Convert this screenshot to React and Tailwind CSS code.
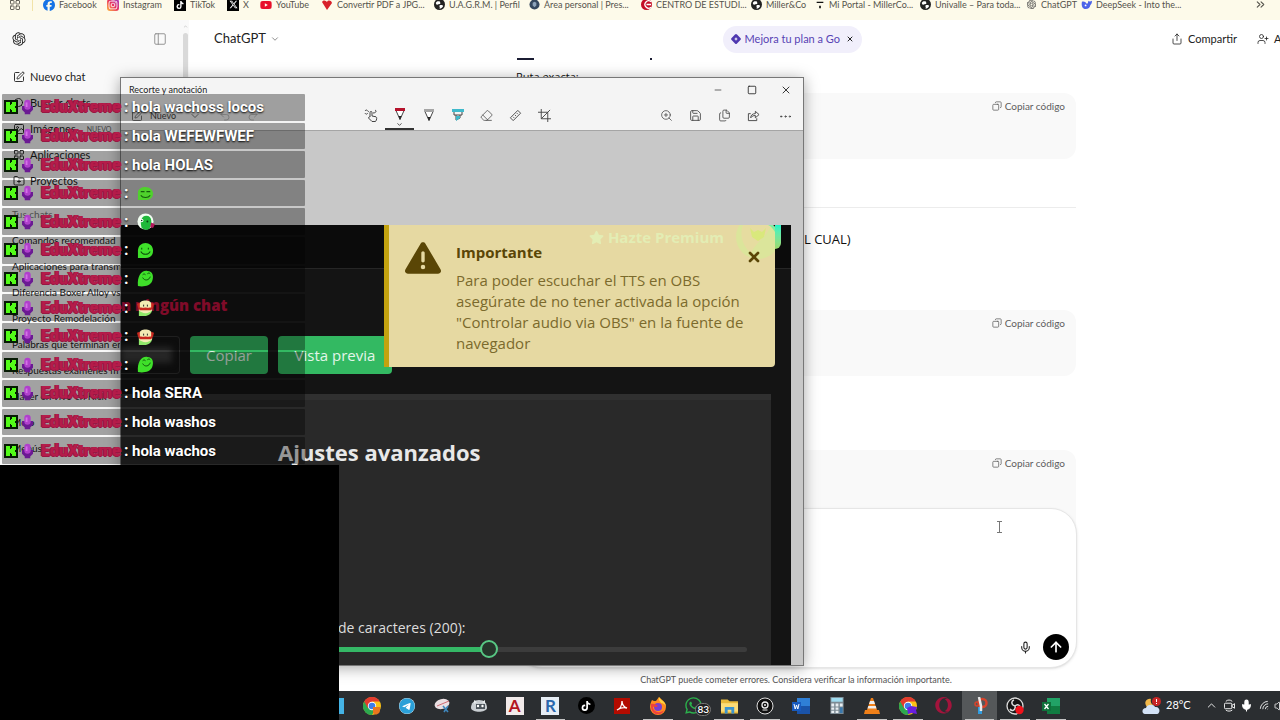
import React from "react";
import {
  FaFacebook, FaTiktok, FaYoutube, FaTelegram, FaWhatsapp, FaOpera, FaStar, FaTriangleExclamation, FaXTwitter, FaInstagram,
} from "react-icons/fa6";
import { RiOpenaiFill } from "react-icons/ri";
import {
  ArrowUp, ChevronDown, ChevronUp, ChevronsRight, Copy, Ellipsis, Eraser, Files, FolderPlus, LayoutGrid,
  Mic, Minus, PanelLeft, Redo2, Save, Search, Share, Square, SquarePen, Undo2, UserPlus, X, ZoomIn,
  Volume2, Wifi, Image as Picture,
} from "lucide-react";

function Globe() {
  return (
    <svg viewBox="0 0 12 12" className="size-[11px]">
      <circle cx="6" cy="6" r="6" fill="#222" />
      <path d="M2 4c2-2.500 3-1 4.500-1.500C6 4 8 4 6.500 5.500 5 6 4 5 3.500 6.500 2.500 6 2 5 2 4zM6 7c2-1 3.500 0 4 .5C9 9.500 7.500 10.500 6 10.500 7 9 5.500 8.500 6 7z" fill="#fff" />
    </svg>
  );
}

function Chrome({ badge }) {
  return (
    <svg viewBox="0 0 18 18" className="size-[18px]">
      <circle cx="9" cy="9" r="9" fill="#fbc116" />
      <path d="M1.200 4.500A9 9 0 0 0 9 18l3.900-6.800L9 9z" fill="#2da94f" />
      <path d="M1.200 4.500A9 9 0 0 1 16.800 4.500H9L5 11.300z" fill="#e33b2e" />
      <circle cx="9" cy="9" r="4.200" fill="#fff" />
      <circle cx="9" cy="9" r="3.300" fill="#3f7de8" />
      {badge === "orange" && <path d="M10 10h7v4a4 4 0 0 1-7 2z" fill="#e9761d" />}
      {badge === "purple" && <path d="M8 11l4-2 6 1-1 3 1 4-5-1-4 1z" fill="#6a1fe0" />}
    </svg>
  );
}

const bookmarks = [
  { name: "Facebook", w: "w-[64px]", icon: <FaFacebook className="size-3 text-[#1673e6]" /> },
  { name: "Instagram", w: "w-[67px]", icon: <span className="grid size-3 place-items-center rounded-[3px] bg-linear-to-tr from-[#fdb52a] via-[#e8315f] to-[#a22bc4] text-white"><FaInstagram className="size-[10px]" /></span> },
  { name: "TikTok", w: "w-[53px]", icon: <span className="grid size-3 place-items-center bg-black text-white"><FaTiktok className="size-2" /></span> },
  { name: "X", w: "w-[33px]", icon: <span className="grid size-3 place-items-center bg-black text-white"><FaXTwitter className="size-[9px]" /></span> },
  { name: "YouTube", w: "w-[61px]", icon: <FaYoutube className="size-3 text-[#e8102a]" /> },
  { name: "Convertir PDF a JPG...", w: "w-[113px]", icon: <svg viewBox="0 0 12 12" className="size-3"><path d="M1 3c2-3 4-1 5 0 1-2 4-2 5 1L6 11z" fill="#d8212b" /></svg> },
  { name: "U.A.G.R.M. | Perfil", w: "w-[95px]", icon: <Globe /> },
  { name: "Área personal | Pres...", w: "w-[112px]", icon: <svg viewBox="0 0 12 12" className="size-[11px]"><circle cx="6" cy="6" r="5.500" fill="#34475f" /><path d="M4 4l2-1 2 1v3L6 9 4 7z" fill="#8da3bb" /></svg> },
  { name: "CENTRO DE ESTUDI...", w: "w-[110px]", icon: <svg viewBox="0 0 12 12" className="size-[11px]"><circle cx="6" cy="6" r="6" fill="#c40d26" /><path d="M11 3a4 4 0 1 0 0 6M6 6h5" stroke="#fff" strokeWidth="1.400" fill="none" /></svg> },
  { name: "Miller&Co", w: "w-[64px]", icon: <Globe /> },
  { name: "Mi Portal - MillerCo...", w: "w-[105px]", icon: <svg viewBox="0 0 12 12" className="size-[10px]"><path d="M2 2h8v1.500H2zM5 7h2v3H5z" fill="#111" /></svg> },
  { name: "Univalle – Para toda...", w: "w-[106px]", icon: <Globe /> },
  { name: "ChatGPT", w: "w-[55px]", icon: <RiOpenaiFill className="size-[11px] text-[#444]" /> },
  { name: "DeepSeek - Into the...", w: "w-[110px]", icon: <svg viewBox="0 0 12 12" className="size-[11px]"><path d="M1 3c2-1 4 0 5 2 1 1 2-1 2-3 1 1 2 1 4 0 0 3-1 4-2 5 0 2-2 4-5 4S0 8 1 3z" fill="#4c63e8" /><circle cx="5" cy="7" r="1" fill="#fff" /></svg> },
];

function Bookmarks() {
  return (
    <nav className="flex h-5 shrink-0 items-center bg-[#fdfaea] pb-[11px] pl-[9px] text-[9px] text-[#55534c]">
      <LayoutGrid className="size-3 shrink-0" strokeWidth={1.8} />
      <span className="ml-[11px] mr-[10px] h-3 w-px shrink-0 bg-[#f2e3a8]" />
      {bookmarks.map((b) => (
        <a key={b.name} href="#" className={"flex shrink-0 items-center gap-1 whitespace-nowrap [&>*]:shrink-0 " + b.w}>
          {b.icon}
          {b.name}
        </a>
      ))}
      <button aria-label="Más marcadores" className="ml-auto mr-[13px]"><ChevronsRight className="size-[13px]" /></button>
    </nav>
  );
}

const navItems = [
  { name: "Nuevo chat", Icon: SquarePen },
  { name: "Buscar chats", Icon: Search },
  { name: "Imágenes", Icon: Picture, tag: "NUEVO" },
  { name: "Aplicaciones", Icon: LayoutGrid },
  { name: "Proyectos", Icon: FolderPlus },
];
const chats = [
  "Comandos recomendad", "Aplicaciones para transm", "Diferencia Boxer Alloy vs", "Proyecto Remodelación", "Palabras que terminan en",
  "Respuestas exámenes m", "Hacer en vivo en Kick", "Mejo", "Menús",
];

function Sidebar() {
  return (
    <aside className="flex w-[189px] shrink-0 overflow-hidden bg-[#f9f9f9]">
      <div className="min-w-0 flex-1">
        <div className="flex h-[38px] items-center justify-between pl-[11px] pr-[15px]">
          <RiOpenaiFill className="size-4 text-[#222]" />
          <button aria-label="Cerrar barra lateral"><PanelLeft className="size-[14px] text-[#888]" strokeWidth={1.5} /></button>
        </div>
        <ul className="mt-[6px] pl-[13px] text-[11px] text-[#1c1c1c]">
          {navItems.map(({ name, Icon, tag }) => (
            <li key={name}>
              <a href="#" className="flex h-[26px] items-center gap-[5px]">
                <Icon className="size-3 shrink-0" strokeWidth={1.8} />
                {name}
                {tag && <span className="ml-[6px] text-[7px] text-[#666]">{tag}</span>}
              </a>
            </li>
          ))}
        </ul>
        <h2 className="mt-[7px] h-[26px] pl-3 text-[10px] leading-[26px] text-[#777]">Tus chats</h2>
        <ul className="pl-3 text-[10px] text-[#1c1c1c]">
          {chats.map((c) => (
            <li key={c}><a href="#" className="flex h-[26px] items-center whitespace-nowrap">{c}</a></li>
          ))}
        </ul>
      </div>
      <div className="flex w-[7px] flex-col items-center pt-1">
        <ChevronUp className="size-[5px] text-[#999]" />
        <span className="mt-1 h-[300px] w-[5px] rounded-full bg-[#d9d9d9]" />
      </div>
    </aside>
  );
}

function CodeBlock({ className }) {
  return (
    <div className={"flex shrink-0 items-start justify-end rounded-xl bg-[#f9f9f9] pr-[11px] pt-[5px] " + className}>
      <button className="flex h-4 items-center gap-[3px] text-[10px] text-[#5d5d5d]">
        <Copy className="size-[10px] -scale-x-100" strokeWidth={1.8} />
        Copiar código
      </button>
    </div>
  );
}

function ChatMain() {
  return (
    <main className="flex min-w-0 flex-1 flex-col bg-white">
      <header className="flex h-[38px] shrink-0 items-center pl-[25px]">
        <button className="flex items-center gap-1 text-[13px] text-[#222]">ChatGPT <ChevronDown className="size-[10px] text-[#777]" /></button>
        <div className="ml-auto flex h-[27px] items-center gap-[6px] rounded-full bg-[#f1effb] px-2 text-[11px] text-[#5743b4]">
          <a href="#" className="flex items-center gap-1">
            <svg viewBox="0 0 10 10" className="size-[10px]"><path d="M4 .6a1.400 1.400 0 0 1 2 0L9.400 4a1.400 1.400 0 0 1 0 2L6 9.400a1.400 1.400 0 0 1-2 0L.6 6a1.400 1.400 0 0 1 0-2z" fill="#4f38b0" /><path d="M5 3l.6 1.400L7 5l-1.400.6L5 7l-.6-1.400L3 5l1.400-.6z" fill="#fff" /></svg>
            Mejora tu plan a Go
          </a>
          <button aria-label="Cerrar oferta"><X className="size-2 text-[#222]" strokeWidth={3} /></button>
        </div>
        <button className="ml-[309px] flex items-center gap-[5px] text-[11px] text-[#222]"><Share className="size-3" strokeWidth={1.6} />Compartir</button>
        <button className="ml-5 flex w-[23px] shrink-0 items-center gap-[5px] overflow-hidden text-[11px] text-[#222]"><UserPlus className="size-3 shrink-0" strokeWidth={1.6} />A</button>
      </header>
      <div className="ml-[327px] flex w-[560px] min-h-0 flex-1 flex-col overflow-hidden font-['Open_Sans','Noto_Sans',sans-serif] text-[13px] text-[#111]">
        <div className="flex h-[2px] shrink-0"><span className="ml-px w-[17px] bg-[#1b1d33]" /><span className="ml-[116px] w-[2px] bg-[#1b1d33]" /></div>
        <p className="mt-[7px] h-5 shrink-0 text-[11px] leading-5">Ruta exacta:</p>
        <CodeBlock className="mt-[6px] h-[66px] font-['Lato',sans-serif]" />
        <hr className="mt-12 shrink-0 border-[#ececec]" />
        <p className="mt-[21px] h-5 shrink-0 pl-[288px] leading-5">L CUAL)</p>
        <CodeBlock className="mt-[61px] h-[66px] font-['Lato',sans-serif]" />
        <CodeBlock className="mt-[74px] h-[90px] font-['Lato',sans-serif]" />
      </div>
      <form className="relative -mt-5 ml-[327px] flex h-[160px] w-[561px] shrink-0 flex-col rounded-[26px] border border-[#e6e6e6] bg-white p-[7px] shadow-sm" onSubmit={(e) => e.preventDefault()}>
        <textarea aria-label="Mensaje" className="w-full flex-1 resize-none outline-none" />
        <div className="flex items-center justify-end gap-[11px]">
          <button type="button" aria-label="Dictar"><Mic className="size-[13px] text-[#222]" /></button>
          <button aria-label="Enviar" className="grid size-[26px] place-items-center rounded-full bg-black text-white"><ArrowUp className="size-4" strokeWidth={2.5} /></button>
        </div>
        <svg viewBox="0 0 7 12" className="absolute right-[73px] top-[12px] h-3 w-[7px]" stroke="#777" fill="none"><path d="M1 .5h5M1 11.500h5M3.500 1v10" /></svg>
      </form>
      <p className="ml-[327px] h-[23px] w-[560px] shrink-0 text-center text-[9px] leading-[23px] text-[#555]">ChatGPT puede cometer errores. Considera verificar la información importante.</p>
    </main>
  );
}

function PenTip({ color, wide }) {
  return (
    <svg viewBox="0 0 14 14" className="size-[14px] shrink-0" fill="none" stroke="#444">
      {wide ? (
        <><path d="M1 1h12v3H1z" fill={color} stroke="none" /><path d="M3 4v3h8V4M5 7v5l4-2V7" /><path d="M5 8h4v2l-4 3z" fill={color} stroke="none" /></>
      ) : (
        <><path d="M2.500 2.500 7 12.500l4.500-10z" fill="#fff" /><path d="M2 1h10v3H2z" fill={color} stroke="none" /><path d="M5.500 9h3L7 13z" fill="#222" stroke="none" /></>
      )}
    </svg>
  );
}

function SnipToolbar() {
  const tool = "grid w-[29px] place-items-center pb-[2px]";
  const icon = "size-[13px]";
  return (
    <div className="flex h-[29px] shrink-0 border-b border-[#a5a5a5] bg-[#f4f4f4] text-[#444]">
      <div className="flex w-[235px] shrink-0 items-center pl-[10px] text-[9px]">
        <button className="flex items-center gap-[7px]"><SquarePen className="size-3" strokeWidth={1.4} />Nuevo</button>
        <button aria-label="Opciones" className="ml-[13px]"><ChevronDown className="size-3" strokeWidth={1.4} /></button>
        <button aria-label="Deshacer" className="ml-[18px]"><Undo2 className="size-3 opacity-50" strokeWidth={1.2} /></button>
        <button aria-label="Rehacer" className="ml-4"><Redo2 className="size-3 opacity-50" strokeWidth={1.2} /></button>
      </div>
      <button aria-label="Escritura táctil" className={tool}>
        <svg viewBox="0 0 14 14" className="size-[14px]" fill="none" stroke="#444"><path d="M6 9V4.500a1 1 0 0 1 2 0V8l4 .8c1 .3 1 3-.5 4.700H8L4.500 10c0-1 .8-1.300 1.500-1zM1 3c2-3 3 2 4 0M9 5c3 0 4-2 2-3M1 5c1 2 2 1 3 0" /></svg>
      </button>
      <button aria-label="Bolígrafo" className="flex w-[29px] flex-col items-center border-b-2 border-[#333] pt-[5px]"><PenTip color="#b5122c" /><ChevronDown className="size-[7px] shrink-0" strokeWidth={3} /></button>
      <button aria-label="Lápiz" className={tool}><PenTip color="#a5a5a5" /></button>
      <button aria-label="Marcador" className={tool}><PenTip color="#3fb9cb" wide /></button>
      <button aria-label="Borrador" className={tool}><Eraser className={icon} strokeWidth={1.4} /></button>
      <button aria-label="Regla" className={tool}>
        <svg viewBox="0 0 14 14" className={icon} fill="none" stroke="#444"><path d="M9.500 1.500l3 3-8 8-3-3zM4.500 8.500l1 1M6.500 6.500l1 1M8.500 4.500l1 1" /></svg>
      </button>
      <button aria-label="Recortar" className={tool}>
        <svg viewBox="0 0 14 14" className={icon} fill="none" stroke="#444"><path d="M3.500 0v10.500H14M0 3.500h10.500V14M3.500 10.500 13 1" /></svg>
      </button>
      <button aria-label="Zoom" className={tool + " ml-auto"}><ZoomIn className={icon} strokeWidth={1.4} /></button>
      <button aria-label="Guardar" className={tool}><Save className={icon} strokeWidth={1.6} /></button>
      <button aria-label="Copiar" className={tool}><Files className={icon} strokeWidth={1.5} /></button>
      <button aria-label="Compartir" className={tool}>
        <svg viewBox="0 0 14 14" className={icon} fill="none" stroke="#444"><path d="M4 5H1.500v7.500h9V10M4 9.500c0-3 2-4.500 5-4.500V2.500L13 6 9 9.500V7C7 7 5.500 7.500 4 9.500z" /></svg>
      </button>
      <button aria-label="Más" className="mr-px grid w-[34px] place-items-center"><Ellipsis className="size-[15px]" strokeWidth={1.5} /></button>
    </div>
  );
}

function Toast() {
  return (
    <div role="alert" className="absolute right-[16px] top-0 flex h-[142px] w-[391px] overflow-hidden rounded-r-sm border-l-[5px] border-[#c4a30f] bg-[#e6d9a2] pl-4 text-[#5a4606]">
      <div className="absolute right-[51px] top-[2px] flex items-center gap-1 text-[15px] font-bold leading-5 text-[#e3edb4]"><FaStar />Hazte Premium</div>
      <FaTriangleExclamation className="mt-[15px] size-9 shrink-0" />
      <div className="ml-[15px] mt-[17px] min-w-0">
        <h3 className="text-[15px] font-bold leading-5">Importante</h3>
        <p className="mt-2 whitespace-nowrap text-[15px] leading-[21px] text-[#7b6a2c]">
          Para poder escuchar el TTS en OBS<br />asegúrate de no tener activada la opción<br />"Controlar audio via OBS" en la fuente de<br />navegador
        </p>
      </div>
      <svg viewBox="0 0 40 36" className="absolute right-0 top-0 h-9 w-10"><circle cx="23" cy="12" r="22" fill="#dbe59b" /><path d="M8 0c-4 10 0 22 8 28C20 18 32 12 36 0z" fill="#e6dca0" /><path d="M15 3l4 4 4-2 4 2 4-4-2 9-6 4-6-4z" fill="#d9e87c" /><path d="M33 0h7v7c-2-3-4-6-7-7z" fill="#7eeea5" /></svg>
      <button aria-label="Cerrar aviso" className="absolute right-[13px] top-[24px]"><X className="size-4" strokeWidth={4} /></button>
    </div>
  );
}

function SnipWindow() {
  return (
    <section className="absolute left-[120px] top-[77px] flex h-[589px] w-[684px] flex-col border border-[#777] bg-[#c8c8c8] shadow-[0_2px_14px_rgba(0,0,0,0.35)]">
      <div className="flex h-6 shrink-0 items-center bg-[#f4f4f4] pl-2 text-[9px] text-[#222]">
        <h1>Recorte y anotación</h1>
        <button aria-label="Minimizar" className="ml-auto grid w-[34px] place-items-center"><Minus className="size-[10px]" strokeWidth={1.6} /></button>
        <button aria-label="Maximizar" className="grid w-[34px] place-items-center"><Square className="size-[10px]" strokeWidth={2} /></button>
        <button aria-label="Cerrar" className="grid w-[34px] place-items-center"><X className="size-3" strokeWidth={1.8} /></button>
      </div>
      <SnipToolbar />
      <div className="relative mr-3 mt-[94px] flex min-h-0 flex-1 flex-col overflow-hidden bg-[#141414] font-['Open_Sans','Noto_Sans',sans-serif]">
        <div className="h-11 shrink-0 border-b border-[#262626] bg-[#0b0b0b]" />
        <p className="mt-[26px] h-5 text-[15px] font-extrabold leading-5 text-[#c4123f]">n ningún chat</p>
        <div className="mt-[21px] flex h-[38px] shrink-0 gap-[10px] text-[15px] text-[#e3f5e9]">
          <div className="flex w-[59px] items-center rounded-r border border-l-0 border-[#303030]"><span className="h-4 w-[51px] bg-[#3b3b3b] blur-[3px]" /></div>
          <button className="w-[78px] rounded-sm bg-[#33b962]">Copiar</button>
          <button className="w-[114px] rounded-sm bg-[#33b962]">Vista previa</button>
        </div>
        <div className="mr-5 mt-5 flex-1 border-t-[6px] border-[#303030] bg-[#292929] pt-[37px] text-[#ddd]">
          <h2 className="ml-[157px] text-[22px] font-bold leading-[30px] text-[#e8e8e8]">Ajustes avanzados</h2>
          <label htmlFor="chars" className="ml-[217px] mt-[151px] block text-[14px] leading-5">de caracteres (200):</label>
          <div className="ml-[109px] mr-[24px] mt-[3px] flex h-4 items-center">
            <input id="chars" type="range" min="0" max="400" defaultValue="200" className="h-[5px] w-full appearance-none rounded-full bg-linear-to-r from-[#35b866] from-50% to-[#3c3c3c] to-50% [&::-webkit-slider-thumb]:size-[18px] [&::-webkit-slider-thumb]:appearance-none [&::-webkit-slider-thumb]:rounded-full [&::-webkit-slider-thumb]:border-2 [&::-webkit-slider-thumb]:border-[#58c884] [&::-webkit-slider-thumb]:bg-[#26352b]" />
          </div>
        </div>
        <Toast />
        <span className="absolute right-[10px] top-0 h-6 w-[6px] rounded-br-full bg-linear-to-b from-[#16f5c8] to-[#9bd86a]" />
      </div>
    </section>
  );
}

function Emote({ kind }) {
  return (
    <svg viewBox="0 0 18 18" className="ml-[5px] size-[17px] overflow-visible">
      {kind === "flat" && <><path d="M1 17V8c0-4 4-6 8-6s8 3 8 7-3 7-8 7H1z" fill="#4fd12c" /><path d="M4 7h4M10 7h4M4 11c2 3 8 3 10 0" stroke="#145c0c" strokeWidth="1.100" fill="none" /></>}
      {kind === "smile" && <><path d="M1 17V9c0-5 4-8 8-8s8 3 8 8-3 8-8 8z" fill="#3fe02a" /><path d="M5 6v2M12 6v2M4 10c2 4 8 4 10 0" stroke="#0c4c0a" strokeWidth="1.100" fill="none" /></>}
      {kind === "tilt" && <><path d="M1 17C0 6 5 0 11 1c6 0 7 6 5 11-2 5-9 6-15 5z" fill="#3fe02a" /><path d="M6 5c1-1 2-1 3 0M11 4c1-1 2-1 3 0M6 8c2 4 7 3 8-1" stroke="#0c4c0a" strokeWidth="1" fill="none" /></>}
      {kind === "phones" && <><circle cx="9" cy="9" r="8.500" fill="#f2fff2" /><path d="M5 16c-2-6-1-13 5-13s6 8 4 12-6 3-9 1z" fill="#1fb83a" /><circle cx="5" cy="8" r="1.800" fill="#fff" /><circle cx="5" cy="8" r=".8" fill="#063d10" /><circle cx="11" cy="9" r="1" fill="#063d10" /><path d="M15 10l4 2-2 4-3-1z" fill="#b5155c" /></>}
      {kind === "mask" && <><path d="M2 18v-7h14c0 4-4 7-8 7z" fill="#8fe86a" /><path d="M2 6c1-6 13-6 14 0v6c-3 4-11 4-14 0z" fill="#f3ecb4" /><path d="M0 5l3-1v5h12V4l3 1-1 4-2 3H3L1 9z" fill="#c9281f" /><path d="M5 6h3v3H5zM10 6h3v3h-3z" fill="#f3ecb4" /><path d="M7 6v2M11 6v2" stroke="#222" /></>}
    </svg>
  );
}

const messages = [
  { text: "hola wachoss locos" }, { text: "hola WEFEWFWEF" }, { text: "hola HOLAS" },
  { emote: "flat" }, { emote: "phones" }, { emote: "smile" }, { emote: "tilt" }, { emote: "mask" }, { emote: "mask" }, { emote: "tilt" },
  { text: "hola SERA" }, { text: "hola washos" }, { text: "hola wachos" },
];

function ChatOverlay() {
  return (
    <ol className="absolute left-[2px] top-[94px] grid h-[370px] w-[303px] auto-rows-fr gap-[2px] font-['Roboto',sans-serif] text-[16px] font-bold text-white">
      {messages.map((m, i) => (
        <li key={i} className="flex min-h-0 items-center rounded-[1px] bg-black/35 pl-[2px] leading-5">
          <svg viewBox="0 0 14 14" className="size-[14px] shrink-0"><path d="M0 0h14v14H0z" fill="#061a04" /><path d="M2 2h4v3h1V4h1V2h4v4h-1v2h1v4H8v-2H7V9H6v3H2z" fill="#53fc18" /></svg>
          <svg viewBox="0 0 12 16" className="ml-[4px] h-4 w-[11px] shrink-0"><path d="M0 7h12v4l-3 3v2H3v-2l-3-3z" fill="#6b1a93" /><rect x="2.500" width="7" height="11" rx="3.500" fill="#b040cc" /><path d="M4 3h2v5H4z" fill="#d56fe8" /></svg>
          <span className="ml-[8px] w-[82px] shrink-0 whitespace-nowrap font-black text-[#b51c4a] [text-shadow:1px_0_0_#991643,-1px_0_0_#991643,0_1px_0_#991643]">EduXtreme</span>
          <span className="ml-px w-[8px] shrink-0 [text-shadow:0_1px_2px_#000]">:</span>
          {m.text ? <span className="text-[15px] [text-shadow:0_1px_2px_#000]">{m.text}</span> : <Emote kind={m.emote} />}
        </li>
      ))}
    </ol>
  );
}

const tile = "grid size-[18px] place-items-center text-[14px] font-bold leading-none";
const apps = [
  { name: "Tienda", icon: <span className="size-4 bg-[#45b4e6]" /> },
  { name: "Chrome", icon: <Chrome badge="orange" /> },
  { name: "Telegram", icon: <span className="rounded-full bg-white"><FaTelegram className="size-4 text-[#2ba0d8]" /></span> },
  { name: "Recortes", icon: <svg viewBox="0 0 18 18" className="size-[18px]"><ellipse cx="8" cy="7" rx="7.500" ry="5" transform="rotate(-15 8 7)" fill="#eadfe2" /><path d="M3 9 15 4" stroke="#d06a72" /><path d="M9 9l5 6M14 9l-4 6" stroke="#3f87bd" strokeWidth="1.600" /></svg> },
  { name: "Asistente", icon: <svg viewBox="0 0 18 18" className="size-[18px]"><path d="M1 11c0-5 3-8 8-8s8 3 8 8c-1 5-15 5-16 0z" fill="#c9ced2" /><path d="M4 3l3 2-3 2zM15 3l-3 2 3 2z" fill="#e6eaec" /><path d="M6 7h9v5H6z" fill="#4d555c" /><circle cx="8" cy="9" r="1.200" fill="#fff" /><circle cx="12.500" cy="9" r="1.200" fill="#fff" /></svg> },
  { name: "AutoCAD", icon: <span className={tile + " bg-[#f1eaea] text-[17px] text-[#b3141f]"}>A</span> },
  { name: "Revit", icon: <span className={tile + " bg-[#e6edf5] text-[17px] text-[#2a67ad]"}>R</span>, open: true },
  { name: "TikTok", icon: <span className="grid size-[17px] place-items-center rounded-full bg-black text-white"><FaTiktok className="size-[10px]" /></span> },
  { name: "Acrobat", icon: <svg viewBox="0 0 16 16" className="size-4"><path d="M0 0h16v16H0z" fill="#b30b00" /><path d="M3 12c3-1 5-5 5-9 0 4 2 6 5 7-4-1-7 0-10 2z" stroke="#fff" fill="none" strokeWidth="1.300" /></svg> },
  { name: "Firefox", icon: <svg viewBox="0 0 18 18" className="size-[18px]"><path d="M3 3c1 1 3 1 4 1l3-4c3 3 7 5 7 10a8 8 0 0 1-16 0c0-3 1-5 2-7z" fill="#ff8a1f" /><path d="M10 0c1 3 7 4 7 10-1-3-3-4-5-4-1-2-3-3-2-6z" fill="#ffd23e" /><circle cx="9" cy="10" r="4" fill="#7b3fd0" /><path d="M2 7c3-1 5 1 7 2-2 2-4 0-5 1 0 5 7 7 11 3-2 7-14 6-13-6z" fill="#f0413d" /></svg>, open: true },
  { name: "WhatsApp", icon: <span className="relative"><FaWhatsapp className="size-[19px] text-[#2bb24c]" /><span className="absolute -right-[8px] top-[7px] rounded-full border border-[#777] bg-[#222] px-[1px] text-[10px] font-semibold leading-[11px] text-white">83</span></span> },
  { name: "Explorador", icon: <svg viewBox="0 0 18 16" className="h-4 w-[17px]"><path d="M0 1h7l2 2h9v13H0z" fill="#e8b93a" /><path d="M0 5h18v9H0z" fill="#fbdc77" /><path d="M4 9h10v7h-3v-4H7v4H4z" fill="#3b94cf" /></svg>, open: true },
  { name: "Cámara", icon: <svg viewBox="0 0 18 18" className="size-[18px]"><circle cx="9" cy="9" r="8" fill="#101010" stroke="#ddd" /><circle cx="9" cy="8" r="3" fill="none" stroke="#eee" strokeWidth="1.300" /><circle cx="9" cy="8" r="1" fill="#eee" /><path d="M6.500 13h5" stroke="#eee" /></svg>, open: true },
  { name: "Word", icon: <svg viewBox="0 0 18 16" className="h-4 w-[18px]"><path d="M5 0h13v16H5z" fill="#2f7fd6" /><path d="M5 8h13v8H5z" fill="#1a53a8" /><path d="M0 4h9v9H0z" fill="#185abd" /><path d="M2 6l1.200 5L4.500 7l1.300 4L7 6" stroke="#fff" fill="none" /></svg> },
  { name: "Calculadora", icon: <svg viewBox="0 0 14 18" className="h-[17px] w-[14px]"><path d="M0 0h14v18H0z" fill="#7d8b94" /><path d="M1 1h12v4H1z" fill="#9fdcf0" /><path d="M1 7h3v3H1zM5.500 7h3v3h-3zM10 7h3v3h-3zM1 11h3v2.500H1zM5.500 11h3v2.500h-3zM1 14.500h3V17H1zM5.500 14.500h3V17h-3z" fill="#e8eef1" /><path d="M10 11h3v6h-3z" fill="#3a78ad" /></svg> },
  { name: "VLC", icon: <svg viewBox="0 0 16 18" className="h-[18px] w-4"><path d="M7 1h2l4 12H3z" fill="#f08019" /><path d="M6 4h4l1 3H5zM4.300 9h7.400l.8 2.500h-9z" fill="#eee" /><path d="M1 13h14l1 4H0z" fill="#f08019" /></svg>, open: true },
  { name: "Chrome 2", icon: <Chrome badge="purple" />, open: true },
  { name: "Opera", icon: <FaOpera className="size-[17px] text-[#a3143c]" /> },
  { name: "Recorte y anotación", icon: <svg viewBox="0 0 18 18" className="size-[18px]"><circle cx="11.500" cy="6" r="4" fill="none" stroke="#d8432b" strokeWidth="2.500" /><circle cx="6" cy="7" r="2" fill="none" stroke="#d8432b" strokeWidth="1.500" /><path d="M9 10v7" stroke="#2f9ce0" strokeWidth="4" /><path d="M8 0l2 9v5" stroke="#e9e9e9" strokeWidth="2.500" fill="none" /></svg>, open: true, active: true },
  { name: "OBS", icon: <svg viewBox="0 0 18 18" className="size-[18px]"><circle cx="9" cy="9" r="8" fill="#161616" stroke="#ddd" strokeWidth="1.300" /><path d="M9 9c-4-1-4-5-1-6M9 9c1 4-3 6-5 3M9 9c3-3 6 0 5 3" stroke="#ddd" strokeWidth="1.500" fill="none" /><circle cx="13.500" cy="13" r="4.200" fill="#f1121b" /></svg>, open: true },
  { name: "Excel", icon: <svg viewBox="0 0 18 16" className="h-4 w-[18px]"><path d="M5 0h13v16H5z" fill="#21a366" /><path d="M5 8h13v8H5z" fill="#107c41" /><path d="M0 4h9v9H0z" fill="#0f703b" /><path d="M2.500 6l4 5M6.500 6l-4 5" stroke="#fff" strokeWidth="1.300" /></svg>, open: true },
];

function Taskbar() {
  return (
    <footer className="flex h-[29px] shrink-0 items-center bg-[#2b2e31] pl-[318px] text-white">
      <ul className="grid h-full w-[751px] shrink-0 grid-cols-21">
        {apps.map((a) => (
          <li key={a.name} className={"relative grid place-items-center " + (a.active ? "bg-[#55585a]" : "")}>
            <button aria-label={a.name} className="grid place-items-center">{a.icon}</button>
            {a.open && <span className="absolute inset-x-[3px] bottom-0 h-px bg-[#c4c4c4]" />}
          </li>
        ))}
      </ul>
      <div className="ml-[73px] flex shrink-0 items-center text-[11px]">
        <svg viewBox="0 0 20 18" className="h-[18px] w-5"><path d="M5 10C1 5 5 1 9 2 8 5 10 8 12 8z" fill="#f2b84a" /><path d="M3 17c-4-1-3-6 1-6 1-4 8-4 9-1 5-1 6 6 2 7z" fill="#d3e2f6" /><circle cx="14.500" cy="4.500" r="4.500" fill="#c72525" /><path d="M14.500 2v3M14.500 6v1" stroke="#fff" /></svg>
        <span className="ml-1 w-[26px] whitespace-nowrap">28°C</span>
        <ChevronUp className="ml-[13px] size-[13px]" strokeWidth={1.6} />
        <svg viewBox="0 0 12 14" className="ml-[6px] h-[13px] w-[11px]" fill="none" stroke="#fff"><rect x=".5" y="4.500" width="8" height="6" rx="1" /><path d="M8.500 7l3-2v5l-3-2M2 2.500C4 .5 7 .5 9 2.500M2 12c2 1.500 5 1.500 7 0" /></svg>
        <Mic className="ml-[5px] size-[13px] fill-white" />
        <Wifi className="ml-[6px] size-3 rotate-[-45deg]" strokeWidth={1.6} />
        <Volume2 className="ml-[3px] size-3" strokeWidth={1.6} />
      </div>
    </footer>
  );
}

export default function App() {
  return (
    <div className="relative flex h-screen flex-col overflow-hidden bg-white font-['Lato','Open_Sans',sans-serif]">
      <Bookmarks />
      <div className="flex min-h-0 flex-1">
        <Sidebar />
        <ChatMain />
      </div>
      <Taskbar />
      <SnipWindow />
      <ChatOverlay />
      <div className="absolute bottom-0 left-0 top-[465px] w-[339px] bg-black" />
    </div>
  );
}
